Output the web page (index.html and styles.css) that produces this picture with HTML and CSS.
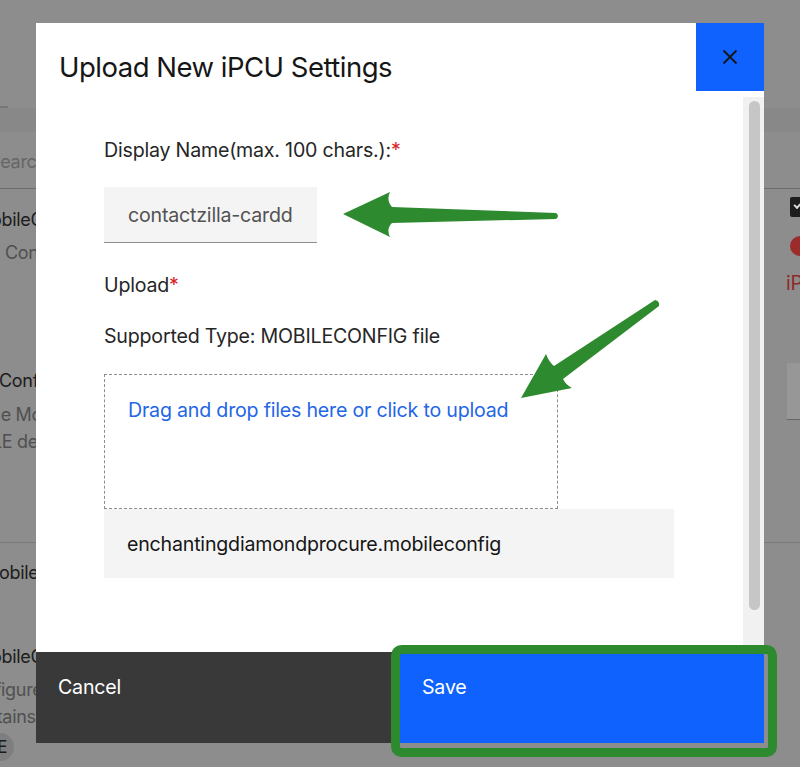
FILE: index.html
```html
<!DOCTYPE html>
<html lang="en">
<head>
<meta charset="utf-8">
<title>Upload New iPCU Settings</title>
<link rel="stylesheet" href="styles.css">
</head>
<body>
<div class="bg">
  <div class="bg-top"><span class="tab-dash"></span></div>
  <div class="bg-band"></div>
  <div class="bg-search"><span class="search-text">Search</span></div>
  <div class="bg-row row1">
    <div class="bg-left">
      <div class="t-primary shift-b">MobileConfig</div>
      <div class="t-secondary shift-c gap-xs">iPCU Configuration</div>
      <div class="t-primary shift-c2 gap-big">Configuration</div>
      <div class="t-secondary gap-s shift-e">The MobileConfig</div>
      <div class="t-secondary shift-e2">FILE decoded</div>
    </div>
    <div class="bg-right">
      <span class="chk"></span>
      <span class="dot"></span>
      <span class="t-red">iPCU</span>
      <span class="bg-box"></span>
    </div>
  </div>
  <div class="bg-row row2">
    <div class="bg-left">
      <div class="t-primary shift-m">Mobile</div>
      <div class="t-primary shift-b gap-mid">MobileConfig</div>
      <div class="t-secondary shift-f gap-xs">Configure</div>
      <div class="t-secondary shift-g">Contains</div>
      <span class="badge">FILE</span>
    </div>
  </div>
</div>

<div class="modal">
  <div class="modal-header">
    <h2 class="modal-title">Upload New iPCU Settings</h2>
    <button class="close" aria-label="Close">
      <svg width="16" height="16" viewBox="0 0 16 16"><path d="M1.5 1.5 L14.5 14.5 M14.5 1.5 L1.5 14.5" stroke="#161616" stroke-width="1.8" fill="none"/></svg>
    </button>
  </div>
  <div class="modal-body">
    <div class="content">
      <p class="label">Display Name(max. 100 chars.):<span class="req">*</span></p>
      <div class="input">contactzilla-cardd</div>
      <p class="label upload-label">Upload<span class="req">*</span></p>
      <p class="label supported">Supported Type: MOBILECONFIG file</p>
      <div class="dropzone"><span class="link">Drag and drop files here or click to upload</span></div>
      <div class="file-item">enchantingdiamondprocure.mobileconfig</div>
    </div>
    <div class="scrollbar"><div class="thumb"></div></div>
  </div>
  <div class="modal-footer">
    <button class="btn btn-secondary">Cancel</button>
    <button class="btn btn-primary">Save</button>
  </div>
</div>

<svg class="annot" width="800" height="767" viewBox="0 0 800 767">
  <path d="M343 214 L390 192 Q386 200 392 207 L556 213 Q560 216 556 219 L392 223 Q386 229 390 237 Z" fill="#2e8a2f"/>
  <path d="M521 398 L546 354 Q549 362 554 366 L655 300 Q660 301 659 306 L563 379 Q566 385 572 388 Z" fill="#2e8a2f"/>
  <rect x="395.5" y="649.5" width="377" height="103" rx="6" fill="none" stroke="#2e8a2f" stroke-width="9"/>
</svg>
</body>
</html>
```

FILE: styles.css
```css
* { box-sizing: border-box; }
html, body { margin: 0; padding: 0; }
body {
  width: 800px;
  height: 767px;
  overflow: hidden;
  position: relative;
  font-family: Inter, "Noto Sans", sans-serif;
  background: #8d8d8d;
}

/* background page (dimmed) */
.bg { width: 800px; height: 767px; display: flex; flex-direction: column; font-size: 18px; letter-spacing: -0.3px; }
.bg-top { height: 108px; display: flex; align-items: flex-end; }
.tab-dash { width: 8px; height: 2px; background: #777; }
.bg-band { height: 24px; background: #888888; }
.bg-search { height: 57px; border-bottom: 1px solid #6c6c6c; display: flex; align-items: center; padding-top: 4px; }
.search-text { color: #666; margin-left: -11px; line-height: 26px; }
.bg-row { display: flex; justify-content: space-between; border-bottom: 1px solid #7a7a7a; }
.row1 { height: 354px; }
.row2 { flex: 1; border-bottom: 0; }
.bg-left { display: flex; flex-direction: column; align-items: flex-start; padding-top: 18px; white-space: nowrap; }
.row2 .bg-left { padding-top: 17px; }
.t-primary { color: #1c1c1c; line-height: 26px; }
.t-secondary { color: #505050; line-height: 27px; }
.gap-xs { margin-top: 6px; }
.gap-big { margin-top: 102px; }
.gap-s { margin-top: 7px; }
.gap-mid { margin-top: 58px; }
.shift-b { margin-left: -25px; }
.shift-c { margin-left: -41px; }
.shift-c2 { margin-left: -1px; }
.shift-e { margin-left: -21px; }
.shift-e2 { margin-left: -23px; }
.shift-m { margin-left: -17px; }
.shift-f { margin-left: -39px; }
.shift-g { margin-left: -37px; }
.badge {
  margin-top: 3px;
  margin-left: -26px;
  width: 40px; height: 28px;
  border-radius: 14px;
  background: #7e7e7e;
  color: #1c1c1c;
  font-size: 17px;
  line-height: 28px;
  text-align: right;
  padding-right: 8px;
}
.bg-right { display: flex; flex-direction: column; align-items: flex-start; width: 13px; padding-top: 8px; }
.chk { width: 20px; height: 20px; margin-left: 3px; background: #1e1e1e; border-radius: 2px; position: relative; }
.chk::after { content: ""; position: absolute; left: 4px; top: 5px; width: 6px; height: 3px; border-left: 2px solid #ddd; border-bottom: 2px solid #ddd; transform: rotate(-45deg); }
.dot { width: 20px; height: 20px; margin-top: 19px; margin-left: 3px; border-radius: 50%; background: #9c2b2b; }
.t-red { color: #8e2a2a; margin-top: 14px; margin-left: -1px; line-height: 26px; font-size: 19.6px; }
.bg-box { margin-top: 67px; width: 30px; height: 57px; background: #979797; border-bottom: 1px solid #666; }

/* modal */
.modal {
  position: absolute;
  left: 36px; top: 23px;
  width: 728px; height: 720px;
  background: #fff;
  display: flex; flex-direction: column;
  letter-spacing: -0.2px;
}
.modal-header { height: 68px; padding: 26px 0 0 23px; flex: none; }
.modal-title { margin: 0; font-size: 27.5px; font-weight: 400; line-height: 36px; color: #161616; letter-spacing: -0.5px; }
.close {
  position: absolute; top: 0; right: 0;
  width: 68px; height: 68px;
  padding: 0; border: 0;
  background: #0f62fe;
  display: flex; align-items: center; justify-content: center;
}
.modal-body { flex: 1; display: flex; min-height: 0; }
.content { flex: 1; padding: 46px 0 0 68px; color: #262626; }
.label { margin: 0; font-size: 19.6px; line-height: 26px; color: #262626; }
.req { color: #da1e28; }
.input {
  margin-top: 24px;
  width: 213px; height: 56px;
  background: #f4f4f4;
  border-bottom: 1px solid #8d8d8d;
  padding-left: 24px;
  display: flex; align-items: center;
  font-size: 19.6px; color: #525252;
}
.upload-label { margin-top: 29px; }
.supported { margin-top: 25px; }
.dropzone {
  margin-top: 25px;
  width: 454px; height: 135px;
  border: 1px dashed #8d8d8d;
  padding: 22px 23px;
  font-size: 19.6px; line-height: 26px;
}
.link { color: #1f66e8; }
.file-item {
  width: 570px; height: 69px;
  background: #f4f4f4;
  padding-left: 23px;
  display: flex; align-items: center;
  font-size: 19.6px; color: #161616;
}
.scrollbar { width: 21px; margin-top: 6px; background: #f1f1f1; padding: 4px 4px 0 6px; flex: none; }
.thumb { width: 11px; height: 509px; border-radius: 6px; background: #c6c6c6; }

.modal-footer { height: 91px; flex: none; display: grid; grid-template-columns: 1fr 1fr; }
.btn {
  border: 0; margin: 0;
  font-family: inherit;
  font-size: 19.6px; line-height: 26px;
  letter-spacing: -0.2px;
  color: #fff;
  text-align: left;
  padding: 22px 22px;
  display: flex; align-items: flex-start;
}
.btn-secondary { background: #393939; }
.btn-primary { background: #0f62fe; }

.annot { position: absolute; left: 0; top: 0; pointer-events: none; }
```
